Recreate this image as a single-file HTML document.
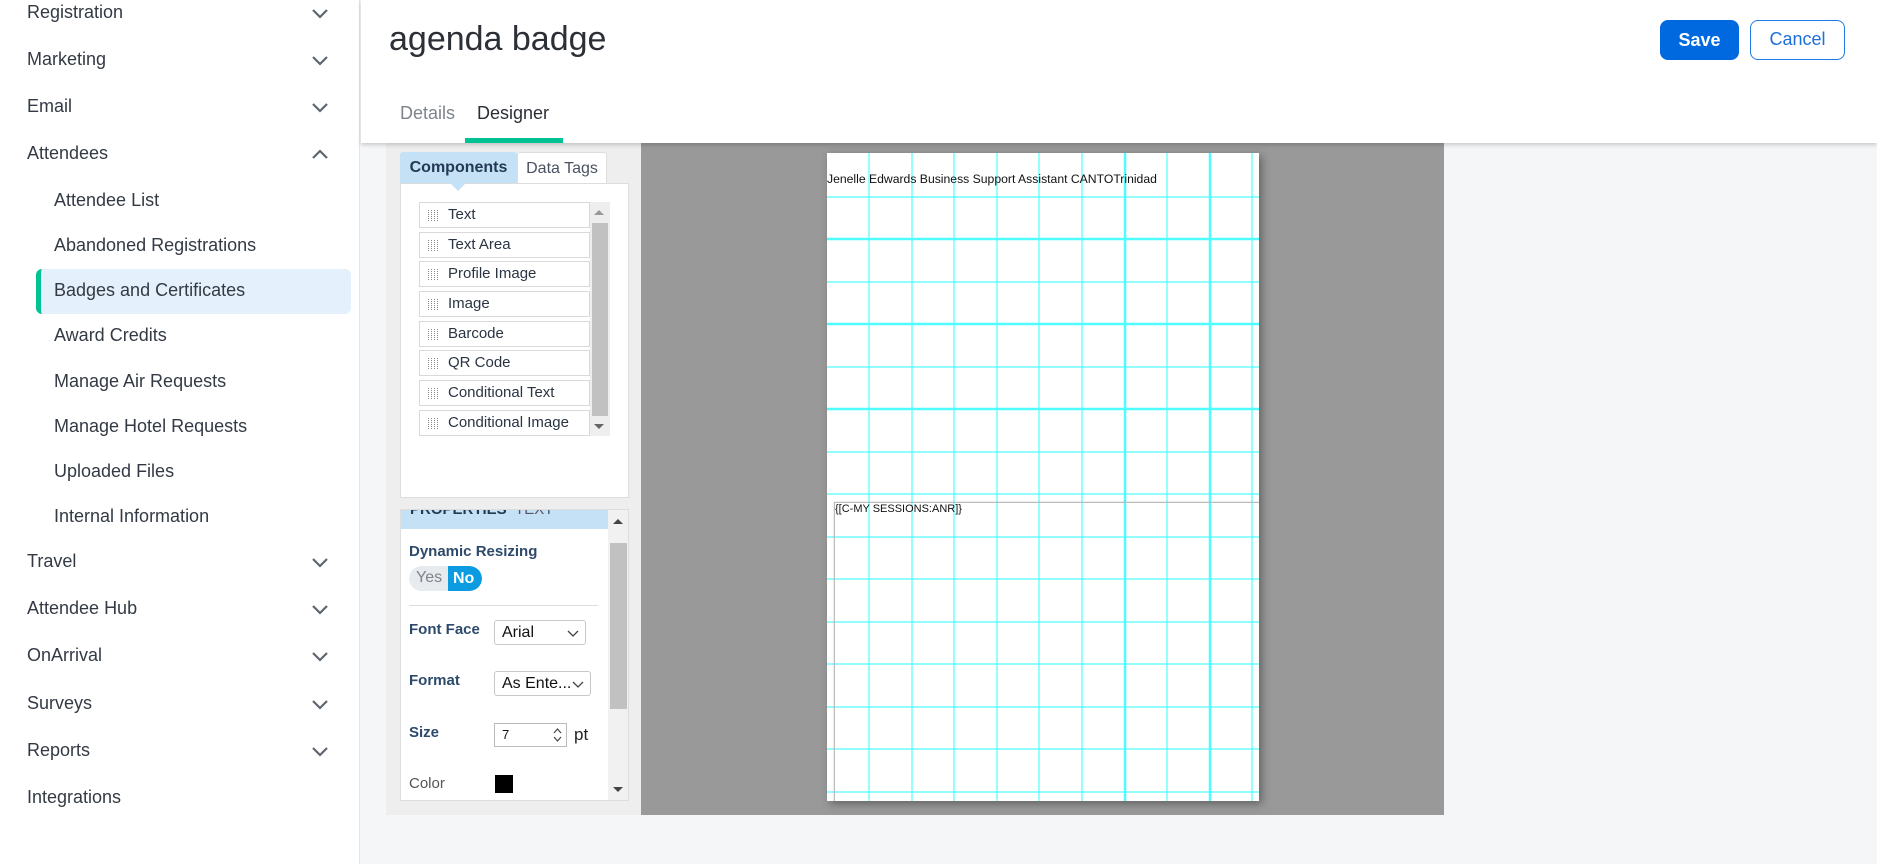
<!DOCTYPE html>
<html><head><meta charset="utf-8"><style>
*{margin:0;padding:0;box-sizing:border-box}
body{width:1877px;height:864px;position:relative;overflow:hidden;background:#f5f6f8;font-family:"Liberation Sans",sans-serif;color:#2b2f36}
.a{position:absolute}
#side{left:0;top:0;width:360px;height:864px;background:#fff;border-right:1px solid #e3e5e8}
.it{position:absolute;left:27px;font-size:18px;color:#333a44;line-height:22px;white-space:nowrap}
.sub{left:54px}
.chev{position:absolute;left:311px;width:18px;height:12px}
#hdr{left:361px;top:0;width:1516px;height:143px;background:#fff;box-shadow:0 2px 4px rgba(0,0,0,.18)}
.ci{position:absolute;left:419px;width:171px;height:26px;border:1px solid #d9d9d9;background:#fff;font-size:15px;line-height:24px;padding-left:28px;color:#2a3442}
.ci:before{content:"";position:absolute;left:8px;top:7px;width:12px;height:11px;background:repeating-linear-gradient(90deg,#8a8a8a 0 1px,transparent 1px 3px);-webkit-mask:repeating-linear-gradient(0deg,#000 0 1px,transparent 1px 2px);mask:repeating-linear-gradient(0deg,#000 0 1px,transparent 1px 2px)}
.lbl{position:absolute;left:409px;font-size:15px;font-weight:bold;color:#2d4a6b}
.sel{position:absolute;left:494px;height:25px;border:1px solid #c8c8c8;border-radius:3px;background:#fff;font-size:16px;line-height:23px;padding-left:7px;color:#111}
</style></head><body>
<div id="side" class="a">
<div class="it" style="top:1px">Registration</div>
<div class="it" style="top:48px">Marketing</div>
<div class="it" style="top:95px">Email</div>
<div class="it" style="top:142px">Attendees</div>
<div class="it sub" style="top:189px">Attendee List</div>
<div class="it sub" style="top:234px">Abandoned Registrations</div>
<div class="a" style="left:36px;top:269px;width:315px;height:45px;background:#e4f0fc;border-radius:6px;border-left:5px solid #00c293"></div>
<div class="it sub" style="top:279px">Badges and Certificates</div>
<div class="it sub" style="top:324px">Award Credits</div>
<div class="it sub" style="top:370px">Manage Air Requests</div>
<div class="it sub" style="top:415px">Manage Hotel Requests</div>
<div class="it sub" style="top:460px">Uploaded Files</div>
<div class="it sub" style="top:505px">Internal Information</div>
<div class="it" style="top:550px">Travel</div>
<div class="it" style="top:597px">Attendee Hub</div>
<div class="it" style="top:644px">OnArrival</div>
<div class="it" style="top:692px">Surveys</div>
<div class="it" style="top:739px">Reports</div>
<div class="it" style="top:786px">Integrations</div>
<svg class="chev" style="top:7px" viewBox="0 0 18 12"><path d="M2 3l7 7 7-7" fill="none" stroke="#5f6670" stroke-width="2.2"/></svg>
<svg class="chev" style="top:54px" viewBox="0 0 18 12"><path d="M2 3l7 7 7-7" fill="none" stroke="#5f6670" stroke-width="2.2"/></svg>
<svg class="chev" style="top:101px" viewBox="0 0 18 12"><path d="M2 3l7 7 7-7" fill="none" stroke="#5f6670" stroke-width="2.2"/></svg>
<svg class="chev" style="top:148px" viewBox="0 0 18 12"><path d="M2 10l7-7 7 7" fill="none" stroke="#5f6670" stroke-width="2.2"/></svg>
<svg class="chev" style="top:556px" viewBox="0 0 18 12"><path d="M2 3l7 7 7-7" fill="none" stroke="#5f6670" stroke-width="2.2"/></svg>
<svg class="chev" style="top:603px" viewBox="0 0 18 12"><path d="M2 3l7 7 7-7" fill="none" stroke="#5f6670" stroke-width="2.2"/></svg>
<svg class="chev" style="top:650px" viewBox="0 0 18 12"><path d="M2 3l7 7 7-7" fill="none" stroke="#5f6670" stroke-width="2.2"/></svg>
<svg class="chev" style="top:698px" viewBox="0 0 18 12"><path d="M2 3l7 7 7-7" fill="none" stroke="#5f6670" stroke-width="2.2"/></svg>
<svg class="chev" style="top:745px" viewBox="0 0 18 12"><path d="M2 3l7 7 7-7" fill="none" stroke="#5f6670" stroke-width="2.2"/></svg>
</div>

<div class="a" style="left:386px;top:143px;width:255px;height:672px;background:#eeeeee"></div>
<div class="a" style="left:400px;top:152px;width:117px;height:32px;background:#c5e1f5;border-radius:3px 3px 0 0;font-size:16px;font-weight:bold;color:#233a55;line-height:32px;text-align:center">Components</div>
<div class="a" style="left:517px;top:152px;width:90px;height:32px;background:#fff;border:1px solid #ddd;border-bottom:none;border-radius:3px 3px 0 0;font-size:16px;color:#4a5260;line-height:31px;text-align:center">Data Tags</div>
<div class="a" style="left:400px;top:183px;width:229px;height:315px;background:#fff;border:1px solid #ddd"></div>
<div class="a" style="left:450px;top:183px;width:0;height:0;border-left:8px solid transparent;border-right:8px solid transparent;border-top:8px solid #c5e1f5"></div>
<div class="ci" style="top:202px">Text</div>
<div class="ci" style="top:232px">Text Area</div>
<div class="ci" style="top:261px">Profile Image</div>
<div class="ci" style="top:291px">Image</div>
<div class="ci" style="top:321px">Barcode</div>
<div class="ci" style="top:350px">QR Code</div>
<div class="ci" style="top:380px">Conditional Text</div>
<div class="ci" style="top:410px">Conditional Image</div>
<div class="a" style="left:590px;top:202px;width:20px;height:234px;background:#eee"></div>
<div class="a" style="left:592px;top:223px;width:16px;height:193px;background:#c1c1c1"></div>
<div class="a" style="left:594px;top:210px;border-left:5px solid transparent;border-right:5px solid transparent;border-bottom:5px solid #999"></div>
<div class="a" style="left:594px;top:424px;border-left:5px solid transparent;border-right:5px solid transparent;border-top:5px solid #666"></div>

<div class="a" style="left:400px;top:509px;width:229px;height:292px;background:#fff;border:1px solid #ddd;overflow:hidden">
 <div class="a" style="left:0;top:0;width:207px;height:19px;background:#c5e1f5;overflow:hidden"><div class="a" style="left:9px;top:-9px;font-size:15px;font-weight:bold;color:#233a55;white-space:nowrap">PROPERTIES <span style="font-weight:normal;color:#556">&nbsp;TEXT</span></div></div>
 <div class="a" style="left:207px;top:0;width:21px;height:292px;background:#f1f1f1"></div>
 <div class="a" style="left:209px;top:33px;width:17px;height:166px;background:#c1c1c1"></div>
</div>
<div class="a" style="left:613px;top:519px;border-left:5px solid transparent;border-right:5px solid transparent;border-bottom:5px solid #444"></div>
<div class="a" style="left:613px;top:787px;border-left:5px solid transparent;border-right:5px solid transparent;border-top:5px solid #444"></div>
<div class="lbl" style="top:543px">Dynamic Resizing</div>
<div class="a" style="left:409px;top:566px;width:73px;height:25px;border-radius:13px;background:#e8ebee;overflow:hidden">
 <div class="a" style="left:7px;top:3px;font-size:16px;color:#7d848c">Yes</div>
 <div class="a" style="left:39px;top:0;width:34px;height:25px;background:#0a9be0;border-radius:0 13px 13px 0;color:#fff;font-size:16px;font-weight:bold;line-height:25px;padding-left:5px">No</div>
</div>
<div class="a" style="left:409px;top:605px;width:189px;height:1px;background:#ddd"></div>
<div class="lbl" style="top:621px">Font Face</div>
<div class="sel" style="top:620px;width:92px">Arial<svg class="a" style="right:6px;top:9px" width="12" height="7" viewBox="0 0 12 7"><path d="M1 1l5 5 5-5" fill="none" stroke="#444" stroke-width="1.3"/></svg></div>
<div class="lbl" style="top:672px">Format</div>
<div class="sel" style="top:671px;width:97px">As Ente...<svg class="a" style="right:6px;top:9px" width="12" height="7" viewBox="0 0 12 7"><path d="M1 1l5 5 5-5" fill="none" stroke="#444" stroke-width="1.3"/></svg></div>
<div class="lbl" style="top:724px">Size</div>
<div class="a" style="left:494px;top:723px;width:73px;height:24px;border:1px solid #bbb;font-size:13px;line-height:22px;padding-left:7px;color:#111">7<svg class="a" style="right:4px;top:3px" width="9" height="16" viewBox="0 0 9 16"><path d="M1 6l3.5-4 3.5 4M1 10l3.5 4 3.5-4" fill="none" stroke="#444" stroke-width="1.2"/></svg></div>
<div class="a" style="left:574px;top:725px;font-size:17px;color:#222">pt</div>
<div class="a" style="left:409px;top:775px;font-size:15px;color:#555">Color</div>
<div class="a" style="left:495px;top:775px;width:18px;height:18px;background:#000"></div>

<div class="a" style="left:641px;top:143px;width:803px;height:672px;background:#999"></div>
<div class="a" style="left:827px;top:153px;width:432px;height:648px;background:#fff;box-shadow:3px 3px 8px rgba(0,0,0,.35);overflow:hidden">
<svg class="a" style="left:0;top:0" width="432" height="648">
<g stroke="#4ffcff" stroke-width="1.2">
<line x1="42" y1="0" x2="42" y2="648"/><line x1="85" y1="0" x2="85" y2="648"/><line x1="127" y1="0" x2="127" y2="648"/><line x1="170" y1="0" x2="170" y2="648"/><line x1="212" y1="0" x2="212" y2="648"/><line x1="255" y1="0" x2="255" y2="648"/><line x1="298" y1="0" x2="298" y2="648"/><line x1="340" y1="0" x2="340" y2="648"/><line x1="383" y1="0" x2="383" y2="648"/><line x1="425" y1="0" x2="425" y2="648"/>
<line x1="0" y1="44" x2="432" y2="44"/><line x1="0" y1="86" x2="432" y2="86"/><line x1="0" y1="129" x2="432" y2="129"/><line x1="0" y1="171" x2="432" y2="171"/><line x1="0" y1="214" x2="432" y2="214"/><line x1="0" y1="256" x2="432" y2="256"/><line x1="0" y1="299" x2="432" y2="299"/><line x1="0" y1="341" x2="432" y2="341"/><line x1="0" y1="384" x2="432" y2="384"/><line x1="0" y1="426" x2="432" y2="426"/><line x1="0" y1="469" x2="432" y2="469"/><line x1="0" y1="511" x2="432" y2="511"/><line x1="0" y1="554" x2="432" y2="554"/><line x1="0" y1="596" x2="432" y2="596"/><line x1="0" y1="639" x2="432" y2="639"/>
</g>
<g stroke="#4ffcff" stroke-width="2.5"><line x1="298" y1="0" x2="298" y2="648"/><line x1="383" y1="0" x2="383" y2="648"/><line x1="0" y1="86" x2="432" y2="86"/><line x1="0" y1="171" x2="432" y2="171"/><line x1="0" y1="256" x2="432" y2="256"/></g>
</svg>
<div class="a" style="left:0;top:19px;font-size:12.2px;color:#111;white-space:nowrap">Jenelle Edwards Business Support Assistant CANTOTrinidad</div>
<div class="a" style="left:7px;top:349px;width:430px;height:310px;border:1px solid #bbb;box-shadow:0 0 2px rgba(0,0,0,.2)"></div>
<div class="a" style="left:8px;top:350px;font-size:11px;color:#111;white-space:nowrap">{[C-MY SESSIONS:ANR]}</div>
</div>

<div id="hdr" class="a">
 <div class="a" style="left:28px;top:20px;font-size:34px;color:#2b2f36">agenda badge</div>
 <div class="a" style="left:39px;top:103px;font-size:18px;color:#7d848c">Details</div>
 <div class="a" style="left:116px;top:103px;font-size:18px;color:#2b2f36">Designer</div>
 <div class="a" style="left:104px;top:138px;width:98px;height:5px;background:#00c293"></div>
 <div class="a" style="left:1299px;top:20px;width:79px;height:40px;background:#0069e0;border-radius:8px;color:#fff;font-size:18px;font-weight:bold;text-align:center;line-height:40px">Save</div>
 <div class="a" style="left:1389px;top:20px;width:95px;height:40px;border:1.5px solid #1f7ae6;border-radius:8px;color:#1f6fd9;font-size:18px;text-align:center;line-height:37px">Cancel</div>
</div>
</body></html>
